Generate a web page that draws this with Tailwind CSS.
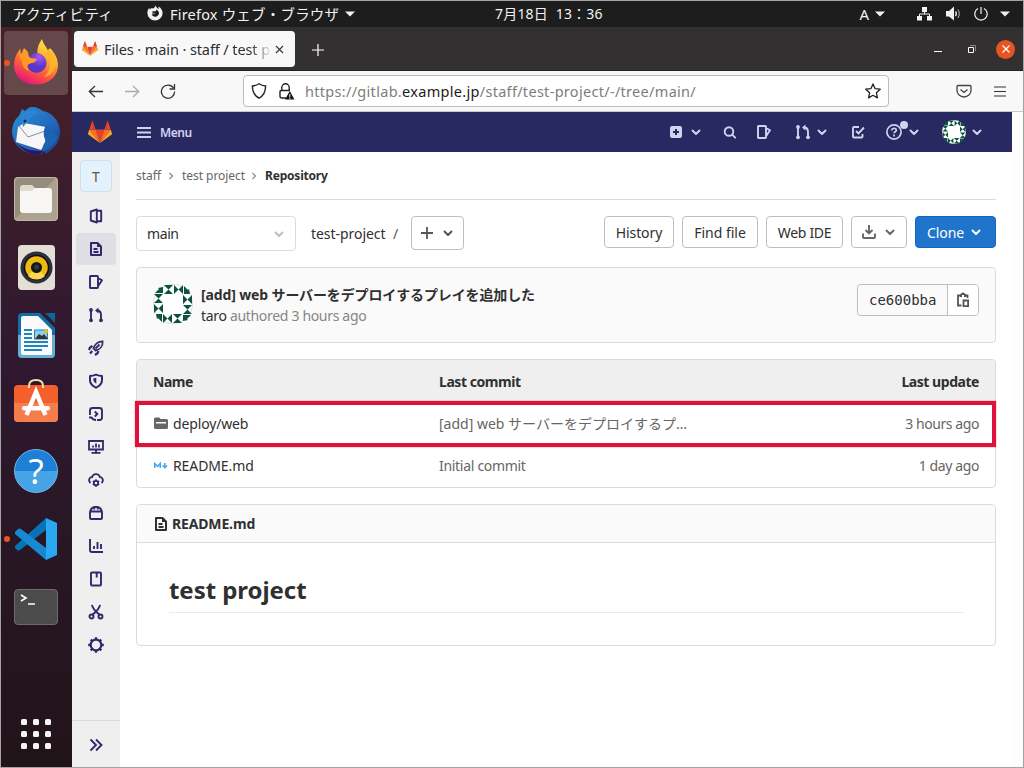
<!DOCTYPE html>
<html lang="ja">
<head>
<meta charset="utf-8">
<title>Files · main · staff / test project</title>
<script src="https://cdn.jsdelivr.net/npm/@tailwindcss/browser@4"></script>
</head>
<body class="w-[1024px] h-[768px] overflow-hidden bg-[#a3a3a3] p-px font-['Noto_Sans','Noto_Sans_CJK_JP',sans-serif] text-[#303030]">
<svg class="hidden">
  <symbol id="down" viewBox="0 0 16 16"><path d="M4.500 6.500 8 10l3.500-3.500" fill="none" stroke="currentColor" stroke-width="2" stroke-linecap="round" stroke-linejoin="round"/></symbol>
  <symbol id="tanuki" viewBox="0 0 24 22"><path fill="#e24329" d="M12 22 16.400 8.500H7.600z"/><path fill="#fc6d26" d="M12 22 7.600 8.500H1.300zM12 22l4.400-13.500h6.300z"/><path fill="#fca326" d="M1.300 8.500 0 12.600c-.1.400 0 .8.300 1L12 22zM22.700 8.500l1.300 4.100c.1.400 0 .8-.3 1L12 22z"/><path fill="#e24329" d="M1.300 8.500h6.300L4.800.4c-.1-.5-.7-.5-.9 0zM22.700 8.500h-6.300L19.200.4c.1-.5.700-.5.900 0z"/></symbol>
  <symbol id="issues" viewBox="0 0 16 16"><path d="M2 2.500q0-.5.500-.5h6.700q.8 0 .8.800v10.400q0 .8-.8.800H2.500q-.5 0-.5-.5zM10 4l4 2.300-4 6" fill="none" stroke="currentColor" stroke-width="1.900" stroke-linejoin="round"/></symbol>
  <symbol id="merge" viewBox="0 0 16 16"><g fill="none" stroke="currentColor" stroke-width="1.900"><path d="M3 3v10M13 13V8c0-2.800-1.500-4.500-4-4.500"/></g><g fill="currentColor"><circle cx="3" cy="3" r="1.900"/><circle cx="3" cy="13.300" r="1.900"/><circle cx="13" cy="13.300" r="1.900"/><path d="M10.500.5v6L7 3.500z"/></g></symbol>
  <symbol id="doc" viewBox="0 0 16 16"><path d="M3 2h6.500L13 5.500V14H3zM5.500 8h4M5.500 11h5" fill="none" stroke="currentColor" stroke-width="2" stroke-linejoin="round"/><path d="M9 2v4h4z" fill="currentColor"/></symbol>
  <symbol id="ident" viewBox="0 0 40 40">
    <clipPath id="idc"><circle cx="20" cy="20" r="19.500"/></clipPath>
    <circle cx="20" cy="20" r="19.500" fill="#fff" stroke="#ddd"/>
    <g clip-path="url(#idc)" fill="#0b5340">
      <g id="idq"><path d="M11 1h9l-4.500 4.500L20 10h-9l4.500-4.500zM21 1l4.500 4.500L21 10zM30 1v9l-4.500-4.500zM31 2l4 4-4 4zM31 10h6l-1-5z"/></g>
      <use href="#idq" transform="rotate(90 20 20)"/><use href="#idq" transform="rotate(180 20 20)"/><use href="#idq" transform="rotate(270 20 20)"/>
    </g>
  </symbol>
</svg>

<div class="flex h-[766px] w-[1022px] flex-col overflow-hidden bg-[#fdfdfd]">
  <!-- desktop panel -->
  <header class="flex h-[26px] shrink-0 items-center bg-[#1d1d1d] text-[14.5px] leading-[26px] whitespace-nowrap text-[#f2f2f2]">
    <span class="ml-[11px] w-[135px] tracking-[0.3px]">アクティビティ</span>
    <svg class="-mt-[2px] size-4 shrink-0" viewBox="0 0 16 16"><path fill="#f2f2f2" d="M8 .3C8.500 2 10.500 2.400 11 4.200 12 3.500 11.600 2 11.300 1.400c2.500 1 4.300 3.800 4.300 6.600a7.600 7.600 0 1 1-15.200 0C.4 5.500 1.300 4 2.300 3c0 .8.300 1.200.7 1.500C3.500 3 5 2.900 6 3.400 7.500 3.200 8.200 2 8 .3z"/><path fill="#1d1d1d" d="M7.500 6.300 5 6.600c.8.800.8 1.600 0 2 1.500.2 2.500-.6 3.500-1-1 1.600-2.800 2-3.800 1.600.5 1.600 1.800 2.500 3.400 2.500 2.300 0 3.900-1.700 3.900-3.700S10 4.700 9 4.400c.6.900.1 1.700-1.500 1.900z"/></svg>
    <span class="ml-[7px] w-[170px] tracking-[0.2px]">Firefox ウェブ・ブラウザ</span>
    <svg class="ml-[5px] h-[6px] w-[10px] shrink-0" viewBox="0 0 10 6"><path d="M0 .5h10L5 5.500z" fill="#f2f2f2"/></svg>
    <span class="ml-[140px] w-[110px] text-[14px] tracking-[0.2px]">7月18日&nbsp; 13：36</span>
    <span class="ml-auto text-[15px]">A</span>
    <svg class="ml-[6px] h-[6px] w-[10px]" viewBox="0 0 10 6"><path d="M0 .5h10L5 5.500z" fill="#f2f2f2"/></svg>
    <svg class="-mt-px ml-[32px] h-[14px] w-[15px]" viewBox="0 0 15 14"><path fill="#f2f2f2" d="M5 0h5v5H5zM0 9h5v4.500H0zM10 9h5v4.500h-5z"/><path d="M7.500 4v3M2.500 10V7h10v3" fill="none" stroke="#f2f2f2"/></svg>
    <svg class="-mt-px ml-[14px] size-4" viewBox="0 0 16 16" fill="none" stroke="#f2f2f2"><path d="M0 5h3l5-4.500v14L3 10.500H0z" fill="#f2f2f2" stroke="none"/><path d="M9.500 5.500c1 1.300 1 3.200 0 4.500" stroke-width="1.300"/><path d="M11.800 3.500c2 2.300 2 6 0 8.500" stroke="#bbb"/></svg>
    <svg class="-mt-px ml-[12px] size-[14px]" viewBox="0 0 14 14" fill="none" stroke="#f2f2f2" stroke-width="1.200"><path d="M4 1.500a6.200 6.200 0 1 0 6 0M7 0v7"/></svg>
    <svg class="mr-[13px] ml-[12px] h-[6px] w-[10px]" viewBox="0 0 10 6"><path d="M0 .5h10L5 5.500z" fill="#f2f2f2"/></svg>
  </header>

  <div class="flex min-h-0 flex-1">
    <!-- dock -->
    <aside class="flex w-[71px] shrink-0 flex-col gap-1 bg-linear-to-b from-[#482027] via-[#2f1830] via-45% to-[#211418] pt-1 pl-[3px]">
      <div class="relative grid size-16 shrink-0 place-items-center rounded-[4px] bg-[#654849]"><i class="absolute top-[29px] left-0 size-[6px] rounded-full bg-[#e95420]"></i>
        <svg class="size-[48px]" viewBox="0 0 48 48"><defs><linearGradient id="f1" x1=".8" y1="0" x2=".3" y2="1"><stop stop-color="#fff044"/><stop offset=".35" stop-color="#ffb130"/><stop offset=".65" stop-color="#ff6038"/><stop offset="1" stop-color="#e5127c"/></linearGradient><radialGradient id="f2" cx=".65" cy=".2"><stop stop-color="#a957f7"/><stop offset="1" stop-color="#5b36c9"/></radialGradient></defs><path fill="url(#f1)" d="M30 0c1 5 5 8 6 12l2-3c5 5 8 11 8 17 0 11-9 19.500-22 19.500S2 37 2 26c0-7 3-12 6-16l1 5 3-6 4 4 1 5c4-1 8 0 9-1-2-6 1-13 4-17z"/><circle cx="24.500" cy="24" r="10" fill="url(#f2)"/><path fill="#ff9b25" d="M8 10l1 6 6-4 1 5 3 2 6 1c-1 4-6 4-8 5-3 2-1 5 1 7-6-1-8-6-8-10-3-4-3-8-1-12z"/><path fill="#ffb52c" opacity=".9" d="M34 15c6 7 5 18-2 23 7-1 12-8 12-14 0-7-4-12-8-14z"/></svg></div>
      <div class="grid size-16 shrink-0 place-items-center"><svg class="size-[48px]" viewBox="0 0 48 48"><defs><linearGradient id="t1" x1="0" y1="0" x2="1" y2="1"><stop stop-color="#2590d8"/><stop offset=".6" stop-color="#2368bd"/><stop offset="1" stop-color="#193586"/></linearGradient></defs><path fill="url(#t1)" d="M20 0c5 0 8 2 11 4 8 1 16 9 17 19 0 9-2 14-6 17-3 4-5 4-8 7l-2-3-4 4C13 46 3 42 0 26c0-7 2-13 7-17L10 2l3 2c2-2 4-4 7-4z"/><path fill="#2a1860" d="M4 35c8 8 15 9 27 9l-4 4C17 47 9 43 4 35z"/><path fill="#f6f6f6" d="M6 20l6-4 22 4-1 17-4 6L4 35z"/><path d="M7 19l9 11 17-6" fill="none" stroke="#87909a"/><path fill="#1d62b3" d="M34 18c-3 5-3 12 0 16-3 3-4 7-3 10 7-2 13-8 15-15z"/><path fill="#2c85d2" d="M9 10c3-7 13-9 19-4-6 1-9 4-12 8l-5 6z"/><circle cx="13" cy="14" r="1.500" fill="#133"/></svg></div>
      <div class="grid size-16 shrink-0 place-items-center"><svg class="size-[44px]" viewBox="0 0 44 44"><rect width="44" height="44" rx="4" fill="#aba390"/><path d="M1 1h41L1 42z" fill="#958d7b"/><rect x=".5" y=".5" width="43" height="43" rx="4" fill="none" stroke="#bdb7a8"/><path fill="#e0dacd" d="M6 11q0-3 3-3h8q2 0 3 2l2 3v5H6z"/><path fill="#f8f7f6" d="M6 14h12l3-3h14q3 0 3 3v19q0 3-3 3H9q-3 0-3-3z"/></svg></div>
      <div class="grid size-16 shrink-0 place-items-center"><svg class="h-[45px] w-[37px]" viewBox="0 0 37 45"><rect width="37" height="45" rx="4" fill="#e3dfd5"/><circle cx="18.500" cy="22.500" r="16" fill="#2d2f3c"/><circle cx="18.500" cy="22.500" r="12" fill="#efb914" stroke="#111" stroke-width="1.500"/><path d="M10 31a12 12 0 0 0 17 0l-9-9z" fill="#ffd64c"/><circle cx="18.500" cy="22.500" r="5.500" fill="#15181a"/><circle cx="18.500" cy="22" r="2.500" fill="#34383a"/></svg></div>
      <div class="grid size-16 shrink-0 place-items-center"><svg class="h-[45px] w-[37px]" viewBox="0 0 37 45"><path fill="#116fa4" d="M4 0h18l15 15v26q0 4-4 4H4q-4 0-4-4V4q0-4 4-4z"/><path fill="#64afd8" d="M0 22h37v19q0 4-4 4H4q-4 0-4-4z"/><path fill="#fafafa" d="M5 3h15l14 14v24q0 1-1 1H5q-2 0-2-2V5q0-2 2-2z"/><path fill="#0c659b" d="M27 0h10v10z"/><path d="M6 17h8M6 21h8M6 25h8M6 29h24M6 33h24M6 37h18" stroke="#2185bd" stroke-width="1.800"/><rect x="16.500" y="17" width="13" height="9" fill="#8ccff0" stroke="#2185bd"/><path d="M17 26l4-5 3 2 2-2 4 5z" fill="#333"/><circle cx="28" cy="18.500" r="2" fill="#f3c01c"/></svg></div>
      <div class="grid size-16 shrink-0 place-items-center"><svg class="-mt-[6px] size-[44px]" viewBox="0 0 44 44"><rect y="7" width="44" height="37" rx="4" fill="#f4602c"/><path d="M0 25h44v15q0 4-4 4H4q-4 0-4-4z" fill="#f47d4c"/><path d="M15 10V8q0-6 7-6t7 6v2" fill="none" stroke="#f5dfac" stroke-width="2"/><path d="M12.500 37 22 14l9.500 23" fill="none" stroke="#fff" stroke-width="4.500"/><rect x="8" y="28" width="28" height="4.500" rx="2" fill="#fff"/></svg></div>
      <div class="grid size-16 shrink-0 place-items-center"><div class="grid size-11 place-items-center rounded-full border border-[#72b8e8] bg-linear-to-b from-[#1d7fd5] from-50% to-[#46a3e6] to-50% font-['Noto_Sans'] text-[35px] leading-[42px] text-white">?</div></div>
      <div class="relative grid size-16 shrink-0 place-items-center"><i class="absolute top-[29px] left-0 size-[6px] rounded-full bg-[#e95420]"></i><svg class="size-[42px]" viewBox="0 0 42 42"><path fill="#0873b4" d="M0 28 31 0v12L5 32q-2 1-3 0l-2-2q-1-1 0-2z"/><path fill="#1689d1" d="M0 14l3-3q1-1 3 0l25 19v12L0 16q-1-1 0-2z"/><path fill="#2aa9f2" d="M31 0l11 5v32l-11 5z"/></svg></div>
      <div class="grid size-16 shrink-0 place-items-center"><div class="h-9 w-11 rounded-[4px] border border-[#6b6b6b] bg-[#4b4b4b]"><svg class="size-full" viewBox="0 0 42 34"><path d="M6 5l5 3-5 3M13 14h7" fill="none" stroke="#fff" stroke-width="1.600"/></svg></div></div>
      <div class="mt-[76px] ml-[17px] grid w-[30px] shrink-0 grid-cols-3 gap-[6px]">
        <i class="size-[6px] rounded-[1.500px] bg-[#f4f4f4]"></i><i class="size-[6px] rounded-[1.500px] bg-[#f4f4f4]"></i><i class="size-[6px] rounded-[1.500px] bg-[#f4f4f4]"></i><i class="size-[6px] rounded-[1.500px] bg-[#f4f4f4]"></i><i class="size-[6px] rounded-[1.500px] bg-[#f4f4f4]"></i><i class="size-[6px] rounded-[1.500px] bg-[#f4f4f4]"></i><i class="size-[6px] rounded-[1.500px] bg-[#f4f4f4]"></i><i class="size-[6px] rounded-[1.500px] bg-[#f4f4f4]"></i><i class="size-[6px] rounded-[1.500px] bg-[#f4f4f4]"></i>
      </div>
    </aside>

    <!-- browser window -->
    <div class="flex min-w-0 flex-1 flex-col">
      <div class="flex h-[44px] shrink-0 items-start border-b border-[#222] bg-[#323031] pt-1 pl-[2px] text-white">
        <div class="flex h-9 w-[221px] items-center rounded-[4px] bg-[#f8f8f8] pl-2 whitespace-nowrap text-[#2d2d2d]">
          <svg class="-mt-[2px] h-[15px] w-4 shrink-0"><use href="#tanuki"/></svg>
          <span class="ml-[6px] w-[170px] text-[14.5px] leading-9 tracking-[-0.1px]">Files · main · staff / <span class="bg-linear-to-r from-[#2d2d2d] from-50% to-[#e8e8e8] bg-clip-text text-transparent">test p</span></span>
          <svg class="ml-px size-[9px] shrink-0" viewBox="0 0 9 9"><path d="m1 1 7 7M8 1 1 8" stroke="#333" stroke-width="1.100"/></svg>
        </div>
        <svg class="mt-[13px] ml-[17px] size-3" viewBox="0 0 12 12"><path d="M6 0v12M0 6h12" stroke="#fff" stroke-width="1.200"/></svg>
        <div class="mr-[8px] ml-auto flex h-9 items-center">
          <i class="mt-[5px] h-px w-2 bg-white"></i>
          <svg class="ml-[26px] size-2" viewBox="0 0 8 8"><path d="M.5 2.500h5v5h-5z" fill="none" stroke="#fff"/><path d="M2 .5h5.500V6" fill="none" stroke="#888"/></svg>
          <span class="ml-[20px] grid size-[19px] place-items-center rounded-full bg-[#e95420]"><svg class="size-2" viewBox="0 0 8 8"><path d="m.5.5 7 7m0-7-7 7" stroke="#fff" stroke-width="1.300"/></svg></span>
        </div>
      </div>
      <div class="flex h-[41px] shrink-0 items-center border-b border-[#c8c8c8] bg-[#f8f8f8]">
        <svg class="ml-4 size-4" viewBox="0 0 16 16" fill="none" stroke="#333" stroke-width="1.300"><path d="M15 8.500H1m6-5.500L1.300 8.500 7 14"/></svg>
        <svg class="ml-5 size-4" viewBox="0 0 16 16" fill="none" stroke="#aaa" stroke-width="1.300"><path d="M1 8.500h14M9 3l5.700 5.500L9 14"/></svg>
        <svg class="ml-5 size-4" viewBox="0 0 16 16" fill="none" stroke="#333" stroke-width="1.300"><path d="M13.500 5A6.600 6.600 0 1 0 14.600 8.500M14.500 1v5H9.500"/></svg>
        <div class="ml-[67px] flex h-8 w-[646px] items-center rounded-[4px] border border-[#bdbdbd] bg-white">
          <svg class="ml-[7px] size-4" viewBox="0 0 16 16" fill="none" stroke="#222" stroke-width="1.400"><path d="M8 .8C10 2.200 12 2.800 14.600 3c0 5.500-1.600 9.500-6.600 12.200C3 12.500 1.400 8.500 1.400 3 4 2.800 6 2.200 8 .8z"/></svg>
          <svg class="ml-[11px] size-[17px]" viewBox="0 0 17 17" fill="none" stroke="#222" stroke-width="1.400"><path d="M8 15H4q-2 0-2-2V8.500q0-1 1-1h9M3.800 7.500V4.500a3.700 3.700 0 0 1 7.400 0v3"/><path d="m11.800 8 4.600 8.500H7z" fill="#111" stroke="none"/><path d="M11.800 11v3m0 .6V16" stroke="#fff" stroke-width="1"/></svg>
          <span class="ml-[10px] text-[14.5px] leading-[30px] tracking-[0.3px] whitespace-nowrap text-[#7d7d7d]">https://gitlab.<span class="text-[#1c1c1c]">example.jp</span>/staff/test-project/-/tree/main/</span>
          <svg class="mr-[7px] ml-auto size-4" viewBox="0 0 16 16" fill="none" stroke="#222" stroke-width="1.300" stroke-linejoin="round"><path d="m8 .9 2.100 4.800 5.100.5-3.800 3.500 1 5.200L8 12.300l-4.400 2.600 1-5.200L.8 6.200l5.100-.5z"/></svg>
        </div>
        <svg class="ml-[67px] size-4" viewBox="0 0 16 16" fill="none" stroke="#444" stroke-width="1.300"><path d="M2 2.500h12q1 0 1 1v4a7 6.500 0 0 1-14 0v-4q0-1 1-1zM4.500 6.500 8 9.500l3.500-3"/></svg>
        <svg class="ml-[22px] h-[11px] w-3" viewBox="0 0 12 11"><path d="M0 1h12M0 5.500h12M0 10h12" stroke="#333" stroke-width="1.200"/></svg>
      </div>

      <div class="flex min-h-0 flex-1">
        <div class="flex w-[940px] shrink-0 flex-col bg-white">
          <!-- GitLab navigation bar -->
          <nav class="flex h-10 shrink-0 items-center bg-[#292961] text-[#d1d1f0]">
            <svg class="ml-4 h-[22px] w-6"><use href="#tanuki"/></svg>
            <svg class="ml-[25px] h-[11px] w-[14px]" viewBox="0 0 14 11"><path d="M0 1h14M0 5.500h14M0 10h14" stroke="currentColor" stroke-width="1.900"/></svg>
            <span class="mt-px ml-[9px] text-[12px] leading-4 font-semibold tracking-[-0.4px]">Menu</span>
            <svg class="ml-auto size-3" viewBox="0 0 12 12"><path fill="currentColor" fill-rule="evenodd" d="M2 0h8q2 0 2 2v8q0 2-2 2H2q-2 0-2-2V2q0-2 2-2zm3 3v2H3v2h2v2h2V7h2V5H7V3z"/></svg>
            <svg class="ml-[6px] size-4"><use href="#down"/></svg>
            <svg class="ml-[19px] size-[14px]" viewBox="0 0 14 14" fill="none" stroke="currentColor" stroke-width="1.900"><circle cx="6" cy="6.500" r="4.300"/><path d="m9.200 9.700 3 3" stroke-linecap="round"/></svg>
            <svg class="ml-[19px] size-4"><use href="#issues"/></svg>
            <svg class="ml-[23px] size-4"><use href="#merge"/></svg>
            <svg class="ml-[3px] size-4"><use href="#down"/></svg>
            <svg class="ml-[21px] size-[14px]" viewBox="0 0 14 14" fill="none" stroke="currentColor" stroke-width="1.900"><path d="M8 2H3Q2 2 2 3v8.500q0 1 1 1h7.500q1 0 1-1V9M5 6l2.500 2.500L13 2.500"/></svg>
            <span class="relative ml-[21px] size-4"><svg class="size-4" viewBox="0 0 16 16" fill="none" stroke="currentColor" stroke-width="1.700"><circle cx="8" cy="8" r="7.100"/><path d="M5.700 6.500C5.700 3.400 10.600 3.700 10.300 6.400 10.200 7.700 8 7.700 8 9.300M8 10.500v2"/></svg><i class="absolute -top-[3px] left-[14px] size-2 rounded-full bg-[#d1d1f0]"></i></span>
            <svg class="ml-[4px] size-4"><use href="#down"/></svg>
            <svg class="ml-[20px] size-6"><use href="#ident"/></svg>
            <svg class="mr-[27px] ml-[3px] size-4"><use href="#down"/></svg>
          </nav>

          <div class="flex min-h-0 flex-1">
            <div class="flex w-12 shrink-0 flex-col bg-[#efefef] text-[#2f2a6b]">
              <div class="mx-2 mt-2 mb-2 grid size-8 shrink-0 place-items-center rounded-[4px] border border-[#cfdfec] bg-[#e3f2fd] pt-[2px] text-[14px] leading-4 text-[#555]">T</div>
              <ul class="mx-1 flex flex-col gap-px [&>li]:grid [&>li]:h-8 [&>li]:place-items-center [&_svg]:size-4">
                <li><svg viewBox="0 0 16 16" fill="none" stroke="currentColor" stroke-width="1.900" stroke-linejoin="round"><path d="m2.800 3.500 6-2v13l-6-2zM9 2.800h4.200v10.400H9"/></svg></li>
                <li class="rounded-[4px] bg-[#dfdee4]"><svg><use href="#doc"/></svg></li>
                <li><svg><use href="#issues"/></svg></li>
                <li><svg><use href="#merge"/></svg></li>
                <li><svg viewBox="0 0 16 16" fill="none" stroke="currentColor" stroke-width="1.800"><path d="M14.600 1.300C10 1.300 6.500 4.500 5.500 8.500l2 2C12 9.500 15 6 14.600 1.300zM7.500 8.500l4-4"/><path d="M4.500 6 2 7.500 1 10M10.500 11l-1 2.200L7 15M4.300 11l-2.300 2.500" stroke-width="2.200"/></svg></li>
                <li><svg viewBox="0 0 16 16" fill="none" stroke="currentColor" stroke-width="2" stroke-linejoin="round"><path d="M8 1.700q3 1.300 6 1.300V7c0 3.500-2.500 6-6 7.700C4.500 13 2 10.500 2 7V3q3 0 6-1.300z"/><path d="M8.300 4.800v5.800C6.200 9.500 5.200 8 5.200 5.500z" fill="currentColor" stroke="none"/></svg></li>
                <li><svg viewBox="0 0 16 16" fill="none" stroke="currentColor" stroke-width="1.900"><path d="M2 9V4.500Q2 2 4.500 2H9M7 2h4.500Q14 2 14 4.500V8M14 6.500v5q0 2.500-2.500 2.500H9M1 11.500h2.500Q5 14 8 14M6.800 5.500 9.300 8l-2.500 2.500"/></svg></li>
                <li><svg viewBox="0 0 16 16" fill="none" stroke="currentColor" stroke-width="1.800"><path d="M1 2h14v8.500H1zM8 10v3M3.500 13.800h9M5 6.500v2M8 4.500v4M11 5.500v3"/></svg></li>
                <li><svg viewBox="0 0 16 16" fill="none" stroke="currentColor" stroke-width="1.800"><path d="M2.500 11C-.5 8 2 5 4 5.200 5 1 11 1 12 5.200c2 0 4.500 3 1.500 5.800"/><circle cx="8" cy="11" r="2.200"/><path d="M8 7.300v2M8 13v2M4.800 9.100l1.600.9M9.600 12l1.600.9M4.800 12.900l1.600-.9M9.600 10l1.600-.9" stroke-width="1.500"/></svg></li>
                <li><svg viewBox="0 0 16 16" fill="none" stroke="currentColor" stroke-width="1.900" stroke-linejoin="round"><path d="M2 6.500h12V13q0 1-1 1H3q-1 0-1-1zM2 6.500Q3.500 2 7 2h2q3.500 0 5 4.500M6.200 2.500v2M9.800 2.500v2"/></svg></li>
                <li><svg viewBox="0 0 16 16" fill="none" stroke="currentColor" stroke-width="1.900"><path d="M2 1v11q0 2 2 2h11M6 8v3M9.500 4v7M13 6v5"/></svg></li>
                <li><svg viewBox="0 0 16 16" fill="none" stroke="currentColor" stroke-width="1.900" stroke-linejoin="round"><path d="M4 1.500h8q1 0 1 1v11q0 1-1 1H4q-1 0-1-1v-11q0-1 1-1zM8.700 2v4.500"/></svg></li>
                <li><svg viewBox="0 0 16 16" fill="none" stroke="currentColor" stroke-width="1.900"><circle cx="3.500" cy="12.500" r="2"/><circle cx="12.500" cy="12.500" r="2"/><path d="M4 .8q.5 4 7.500 10M12 .8q-.5 4-7.500 10"/></svg></li>
                <li><svg viewBox="0 0 16 16" fill="none" stroke="currentColor"><circle cx="8" cy="8" r="5.300" stroke-width="2.200"/><path d="M8 .2v2.500M8 13.300v2.500M.2 8h2.500M13.300 8h2.500M2.700 2.700l1.500 1.500M11.800 11.800l1.500 1.500M2.700 13.300l1.500-1.500M11.800 4.200l1.500-1.500" stroke-width="2.400"/></svg></li>
              </ul>
              <div class="mt-auto grid h-[47px] shrink-0 place-items-center border-t border-[#dbdbdb]"><svg class="mt-[2px] size-4" viewBox="0 0 16 16" fill="none" stroke="currentColor" stroke-width="1.900"><path d="m2.500 2.500 5.500 5.500-5.500 5.500M8 2.500 13.500 8 8 13.500"/></svg></div>
            </div>

            <!-- repository page -->
            <main class="flex w-[892px] flex-col px-4 text-[14px] whitespace-nowrap">
              <div class="flex h-12 shrink-0 items-center border-b border-[#dbdbdb] text-[12px] leading-4 text-[#666]">
                <span class="w-[26px]">staff</span>
                <svg class="mx-[6px] size-2" viewBox="0 0 8 8" fill="none" stroke="#888" stroke-width="1.200"><path d="m1.500 1 3 3-3 3"/></svg>
                <span class="w-[63px] tracking-[-0.05px]">test project</span>
                <svg class="mx-[6px] size-2" viewBox="0 0 8 8" fill="none" stroke="#888" stroke-width="1.200"><path d="m1.500 1 3 3-3 3"/></svg>
                <b class="font-bold tracking-[-0.2px] text-[#303030]">Repository</b>
              </div>
              <div class="mt-4 flex h-[35px] shrink-0 items-start">
                <div class="flex h-[35px] w-40 items-center justify-between rounded-[4px] border border-[#dbdbdb] pr-2 pl-[10px] tracking-[-0.4px]">main<svg class="size-4 text-[#bfbfbf]"><use href="#down"/></svg></div>
                <span class="ml-[15px] w-[74px] leading-[35px] tracking-[-0.05px]">test-project</span><span class="ml-[8px] w-[18px] leading-[35px] text-[#555]">/</span>
                <div class="flex h-[34px] w-[53px] items-center rounded-[4px] border border-[#bfbfbf] pl-[9px] text-[#555]"><svg class="size-3" viewBox="0 0 12 12"><path d="M6 0v12M0 6h12" stroke="currentColor" stroke-width="1.800"/></svg><svg class="ml-[7px] size-4"><use href="#down"/></svg></div>
                <div class="ml-auto flex gap-2 [&>div]:flex [&>div]:h-8 [&>div]:items-center [&>div]:justify-center [&>div]:rounded-[4px] [&>div]:border [&>div]:border-[#bfbfbf]">
                  <div class="w-[70px] tracking-[-0.1px]">History</div>
                  <div class="w-[76px]">Find file</div>
                  <div class="w-[77px] tracking-[-0.3px]">Web IDE</div>
                  <div class="w-[56px] gap-[5px] text-[#666]"><svg class="size-4" viewBox="0 0 16 16" fill="none" stroke="currentColor" stroke-width="1.900"><path d="M2 9.500V13q0 1 1 1h10q1 0 1-1V9.500M8 1v8M4.500 6 8 9.500 11.500 6"/></svg><svg class="size-4"><use href="#down"/></svg></div>
                  <div class="w-[81px] !border-[#1068bf] bg-[#1f75cb] tracking-[-0.1px] text-white"><span>Clone</span><svg class="ml-1 size-4"><use href="#down"/></svg></div>
                </div>
              </div>

              <section class="mt-4 flex h-[76px] shrink-0 rounded-[4px] border border-[#dbdbdb] bg-[#fafafa] px-4 pt-4">
                <svg class="size-10"><use href="#ident"/></svg>
                <div class="ml-2 leading-[21px]"><p class="font-bold tracking-[-0.13px]">[add] web サーバーをデプロイするプレイを追加した</p><p class="tracking-[-0.32px] text-[#868686]"><span class="text-[#303030]">taro</span> authored 3 hours ago</p></div>
                <div class="ml-auto flex h-8 w-[122px] rounded-[4px] border border-[#bfbfbf]"><span class="flex-1 pl-[11px] font-['DejaVu_Sans_Mono',monospace] text-[14px] leading-[30px]">ce600bba</span><span class="grid w-[31px] place-items-center rounded-r-[3px] border-l border-[#bfbfbf] bg-white text-[#555]"><svg class="size-4" viewBox="0 0 16 16" fill="none" stroke="currentColor" stroke-width="1.800"><path d="M6.500 13.500H3v-10h2.500M10 3.500h2.500V6M8.500 8.500h4.600v5.600H8.500z"/><path d="M5 5V2.500L7.500.5h1L11 2.500V5H9V3H7v2z" fill="currentColor" stroke="none"/></svg></span></div>
              </section>

              <section class="relative mt-4 flex h-[129px] shrink-0 flex-col rounded-[4px] border border-[#dbdbdb] [&>div]:grid [&>div]:grid-cols-[286px_1fr_auto] [&>div]:items-center [&>div]:px-4">
                <div class="h-[43px] rounded-t-[3px] bg-[#efefef] font-bold tracking-[-0.45px]"><span>Name</span><span>Last commit</span><span>Last update</span></div>
                <div class="h-[42px] pb-[2px] text-[#666]"><span class="flex items-center tracking-[-0.15px] text-[#303030]"><svg class="mr-1 size-4" viewBox="0 0 16 16"><path fill="#666" fill-rule="evenodd" d="M1 4q0-1.500 1.500-1.500H6Q7 2.500 7.500 4H13.500Q15 4 15 5.500v7q0 1.500-1.500 1.500h-11Q1 14 1 12.500zm2 3v1.500h10V7z"/></svg>deploy/web</span><span>[add] web サーバーをデプロイするプ…</span><span class="tracking-[-0.42px]">3 hours ago</span></div>
                <div class="h-[42px] pb-[2px] text-[#666]"><span class="flex items-center tracking-[-0.1px] text-[#303030]"><svg class="mr-1 size-4" viewBox="0 0 16 16" fill="none" stroke="#42a5f5" stroke-width="1.500"><path d="M1.700 11V6.500L4.500 9.500l2.800-3V11M11.800 6v4M9.600 8.500l2.200 2.200L14 8.500"/></svg>README.md</span><span class="tracking-[-0.3px]">Initial commit</span><span class="tracking-[-0.4px]">1 day ago</span></div>
                <i class="absolute top-[41px] -left-[2px] h-[46px] w-[861px] border-4 border-[#dc143c] outline outline-[#dc143c]/15"></i>
              </section>

              <section class="mt-4 h-[142px] shrink-0 rounded-[4px] border border-[#dbdbdb]">
                <div class="flex h-[38px] items-center rounded-t-[3px] border-b border-[#dbdbdb] bg-[#fafafa] pl-4 font-bold tracking-[-0.15px]"><svg class="mr-[3px] size-4"><use href="#doc"/></svg>README.md</div>
                <h1 class="mx-8 mt-[30px] h-[40px] border-b border-[#eaeaea] text-[24px] leading-[34px] font-bold tracking-[-0.05px]">test project</h1>
              </section>
            </main>
          </div>
        </div>
      </div>
    </div>
  </div>
</div>
</body>
</html>
